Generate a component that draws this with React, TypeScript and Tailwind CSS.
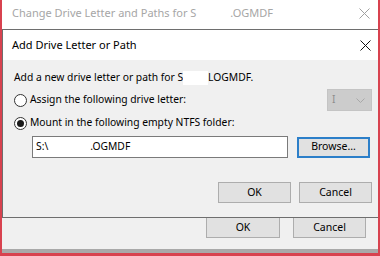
const font = { fontFamily: '"Noto Sans", "Open Sans", sans-serif' };

const CloseX = ({ color }: { color: string }) => (
  <svg width="11" height="11" viewBox="0 0 11 11" className="shrink-0">
    <path d="M0.5 0.5 L10.5 10.5 M10.5 0.5 L0.5 10.5" stroke={color} strokeWidth="1" />
  </svg>
);

const Radio = ({ checked }: { checked?: boolean }) => (
  <span className="w-[13px] h-[13px] rounded-full border border-[#333333] bg-white flex items-center justify-center shrink-0">
    {checked && <span className="w-[7px] h-[7px] rounded-full bg-[#1a1a1a]" />}
  </span>
);

const Button = ({ label, primary }: { label: string; primary?: boolean }) => (
  <div
    className={
      'w-[73px] h-[21px] flex items-center justify-center text-[10.5px] text-black bg-[#e1e1e1] ' +
      (primary ? 'border-2 border-[#2c7fc9]' : 'border border-[#adadad]')
    }
  >
    {label}
  </div>
);

export default function App() {
  return (
    <div
      style={font}
      className="w-[380px] h-[256px] bg-[#f0f0f0] border-l-2 border-r-2 border-b-[3px] border-[#d8424f] flex flex-col overflow-hidden text-black"
    >
      {/* outer window title */}
      <div className="h-[29px] bg-white flex items-center pl-[10px] pr-[8px] pb-[3px] shrink-0">
        <span className="text-[11px] text-[#a6a6a6] whitespace-nowrap">Change Drive Letter and Paths for S</span>
        <span className="w-[34px]" />
        <span className="text-[11px] text-[#a6a6a6]">.OGMDF</span>
        <span className="flex-1" />
        <CloseX color="#a0a0a0" />
      </div>

      {/* inner dialog */}
      <div className="border-t border-l border-b border-[#6e6e6e] flex flex-col shrink-0">
        <div className="h-[30px] bg-white flex items-center pl-[9px] pr-[7px]">
          <span className="text-[11px] whitespace-nowrap">Add Drive Letter or Path</span>
          <span className="flex-1" />
          <CloseX color="#111111" />
        </div>
        <div className="h-[157px] bg-[#f0f0f0] flex flex-col pl-[11px] pr-[6px] text-[10.3px]">
          <div className="h-[16px] mt-[10px] flex items-center whitespace-nowrap">
            <span>Add a new drive letter or path for S</span>
            <span className="w-[25px] h-[14px] bg-white" />
            <span>LOGMDF.</span>
          </div>
          <div className="h-[22px] mt-[3px] flex items-center">
            <Radio />
            <span className="ml-[3px]">Assign the following drive letter:</span>
            <span className="flex-1" />
            <div className="w-[45px] h-[22px] bg-[#cccccc] border border-[#c4c4c4] flex items-center pl-[4px] pr-[6px]">
              <span className="text-[#8c8c8c]">I</span>
              <span className="flex-1" />
              <svg width="9" height="5" viewBox="0 0 9 5">
                <path d="M0.5 0.5 L4.5 4.5 L8.5 0.5" stroke="#a8a8a8" fill="none" strokeWidth="1" />
              </svg>
            </div>
          </div>
          <div className="h-[16px] mt-[4px] flex items-center">
            <Radio checked />
            <span className="ml-[3px]">Mount in the following empty NTFS folder:</span>
          </div>
          <div className="h-[22px] mt-[5px] flex items-center pl-[18px]">
            <div className="w-[256px] h-[22px] bg-white border border-[#7a7a7a] flex items-center pl-[3px]">
              <span>S:\</span>
              <span className="w-[42px]" />
              <span>.OGMDF</span>
            </div>
            <span className="w-[9px]" />
            <Button label="Browse..." primary />
          </div>
          <div className="h-[21px] mt-[24px] flex items-center justify-end gap-[8px]">
            <Button label="OK" />
            <Button label="Cancel" />
          </div>
        </div>
      </div>

      {/* outer window footer */}
      <div className="flex-1 flex flex-col">
        <div className="h-[20px] flex items-center justify-end gap-[13px] pr-[12px]">
          <div className="w-[74px] h-[20px] bg-[#e1e1e1] border border-[#adadad] border-t-0 flex items-center justify-center text-[10.5px]">
            OK
          </div>
          <div className="w-[73px] h-[20px] bg-[#e1e1e1] border border-[#adadad] border-t-0 flex items-center justify-center text-[10.5px]">
            Cancel
          </div>
        </div>
        <div className="flex-1" />
        <div className="h-[4px] bg-[#a9a9a9]" />
      </div>
    </div>
  );
}
